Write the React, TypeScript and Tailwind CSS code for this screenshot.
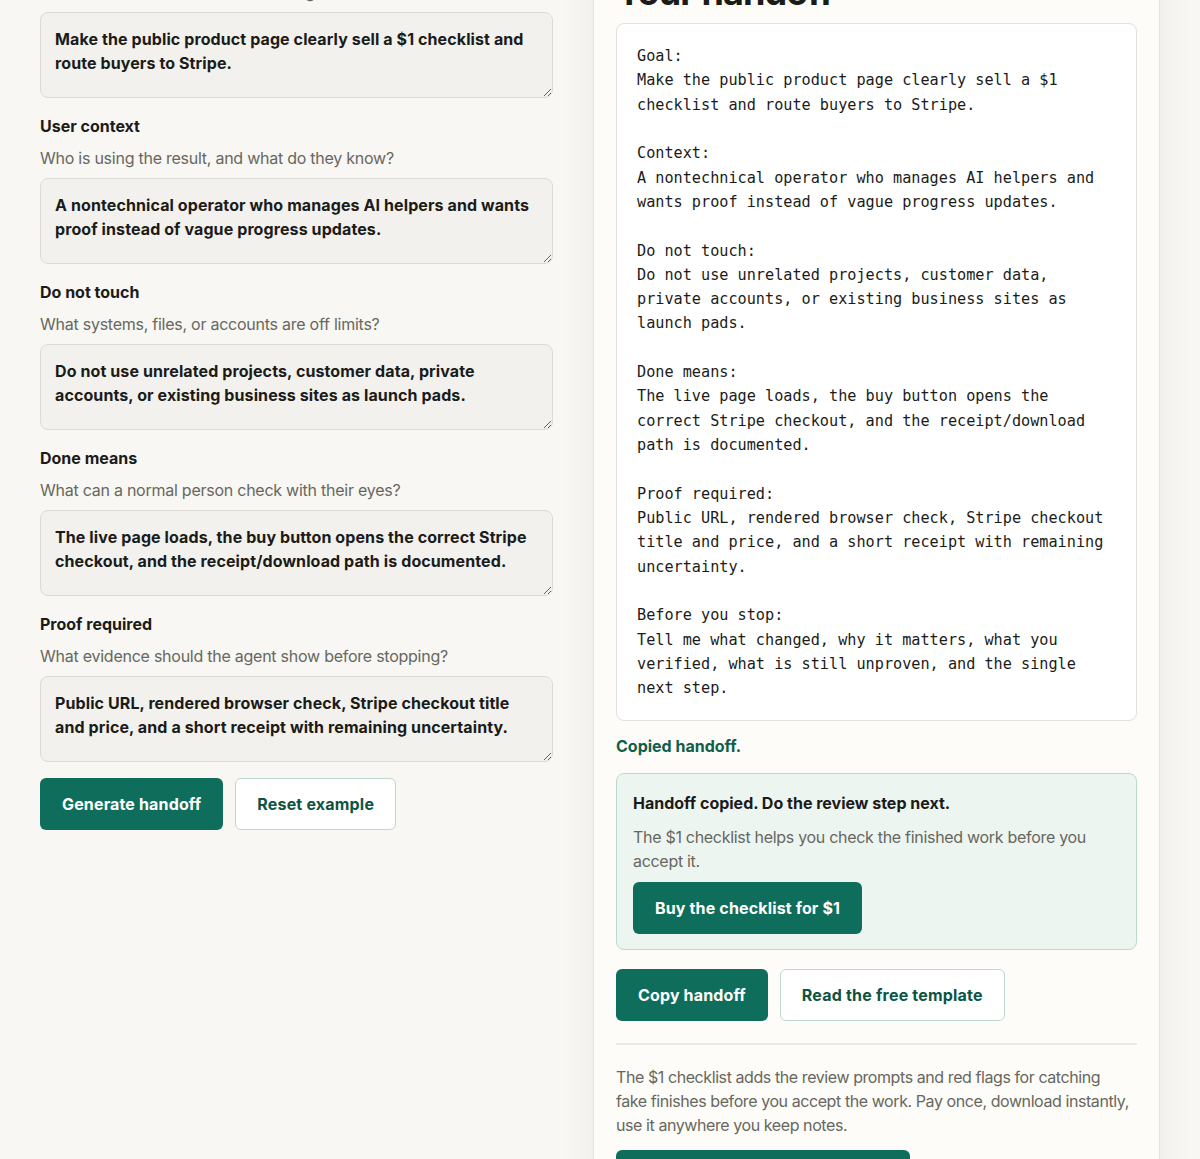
import { useState } from 'react';

type Field = {
  key: string;
  label: string;
  help: string;
  value: string;
};

const initialFields: Field[] = [
  {
    key: 'goal',
    label: 'Goal',
    help: 'What should be different when the agent is finished?',
    value: 'Make the public product page clearly sell a $1 checklist and route buyers to Stripe.',
  },
  {
    key: 'context',
    label: 'User context',
    help: 'Who is using the result, and what do they know?',
    value: 'A nontechnical operator who manages AI helpers and wants proof instead of vague progress updates.',
  },
  {
    key: 'limits',
    label: 'Do not touch',
    help: 'What systems, files, or accounts are off limits?',
    value: 'Do not use unrelated projects, customer data, private accounts, or existing business sites as launch pads.',
  },
  {
    key: 'done',
    label: 'Done means',
    help: 'What can a normal person check with their eyes?',
    value: 'The live page loads, the buy button opens the correct Stripe checkout, and the receipt/download path is documented.',
  },
  {
    key: 'proof',
    label: 'Proof required',
    help: 'What evidence should the agent show before stopping?',
    value: 'Public URL, rendered browser check, Stripe checkout title and price, and a short receipt with remaining uncertainty.',
  },
];

const buildHandoff = (fields: Field[]) => {
  const get = (key: string) => fields.find((f) => f.key === key)?.value.trim() ?? '';
  return [
    `Goal:\n${get('goal')}`,
    `Context:\n${get('context')}`,
    `Do not touch:\n${get('limits')}`,
    `Done means:\n${get('done')}`,
    `Proof required:\n${get('proof')}`,
    'Before you stop:\nTell me what changed, why it matters, what you verified, what is still unproven, and the single next step.',
  ].join('\n\n');
};

const primaryBtn =
  'rounded-md bg-[#0f6e5b] px-[22px] py-[14px] text-base leading-6 font-bold tracking-[0.15px] text-white hover:bg-[#0c5e4d] transition-colors';
const outlineBtn =
  'rounded-md border border-[#bcd8cf] bg-white px-[21px] py-[13px] text-base leading-6 font-bold tracking-[0.2px] text-[#0c5443] hover:bg-[#f3f8f6] transition-colors';

export default function App() {
  const [fields, setFields] = useState<Field[]>(initialFields);
  const [handoff, setHandoff] = useState(() => buildHandoff(initialFields));
  const [copied, setCopied] = useState(true);

  const handleChange = (key: string, value: string) => {
    setFields((prev) => prev.map((f) => (f.key === key ? { ...f, value } : f)));
  };

  return (
    <div className="min-h-screen overflow-hidden bg-[#f8f7f3] font-['Inter',sans-serif] text-[#1b1b19]">
      <div className="-mt-[80px] grid grid-cols-[1fr_567px] gap-10 px-10">
        {/* form column */}
        <div className="pt-[28px]">
          <div className="space-y-4">
            {fields.map((field) => (
              <div key={field.key}>
                <label htmlFor={field.key} className="block text-base leading-6 font-bold text-[#1b1b19]">
                  {field.label}
                </label>
                <p className="mt-2 text-base leading-6 tracking-[-0.25px] text-[#67675f]">{field.help}</p>
                <textarea
                  id={field.key}
                  value={field.value}
                  onChange={(e) => handleChange(field.key, e.target.value)}
                  className="mt-2 block h-[86px] w-full resize-y rounded-lg border border-[#dddbd4] bg-[#f2f1ed] px-[14px] py-[14px] text-base leading-6 font-bold tracking-[0.1px] text-[#1b1b19] focus:outline-none"
                />
              </div>
            ))}
          </div>
          <div className="mt-4 flex gap-3">
            <button type="button" className={primaryBtn} onClick={() => setHandoff(buildHandoff(fields))}>
              Generate handoff
            </button>
            <button
              type="button"
              className={outlineBtn}
              onClick={() => {
                setFields(initialFields);
                setHandoff(buildHandoff(initialFields));
              }}
            >
              Reset example
            </button>
          </div>
        </div>

        {/* output panel */}
        <aside className="min-h-[1400px] border-x border-[#e4e2dc] bg-[#fdfcf8] px-[22px] pt-[50px] shadow-[0_0_36px_rgba(0,0,0,0.06)]">
          <h2 className="text-[36px] leading-[44px] font-bold tracking-tight text-[#1b1b19]">Your handoff</h2>
          <pre className="mt-[9px] whitespace-pre-wrap rounded-lg border border-[#e2e0da] bg-white px-5 pt-5 pb-5 font-['DejaVu_Sans_Mono',monospace] text-[15.2px] leading-[1.6] text-[#1b1b19]">
            {handoff}
          </pre>

          {copied && <p className="mt-[13px] text-base leading-6 font-bold text-[#0f5e4b]">Copied handoff.</p>}

          <div className="mt-[15px] rounded-lg border border-[#bcd9d0] bg-[#edf5f1] px-4 pt-[17px] pb-[15px]">
            <p className="text-base leading-6 font-bold text-[#1b1b19]">Handoff copied. Do the review step next.</p>
            <p className="mt-[10px] text-base leading-6 tracking-[-0.3px] text-[#67675f]">
              The $1 checklist helps you check the finished work before you accept it.
            </p>
            <button type="button" className={`mt-[9px] ${primaryBtn}`}>
              Buy the checklist for $1
            </button>
          </div>

          <div className="mt-[19px] flex gap-3">
            <button type="button" className={primaryBtn} onClick={() => setCopied(true)}>
              Copy handoff
            </button>
            <button type="button" className={outlineBtn}>
              Read the free template
            </button>
          </div>

          <div className="mt-[22px] border-t-2 border-[#ebe9e4] pt-[20px]">
            <p className="text-base leading-6 tracking-[-0.42px] text-[#67675f]">
              The $1 checklist adds the review prompts and red flags for catching
              <br />
              fake finishes before you accept the work. Pay once, download instantly,
              <br />
              use it anywhere you keep notes.
            </p>
            <button type="button" className={`mt-[13px] ${primaryBtn}`}>
              Get the $1 review checklist now
            </button>
          </div>
        </aside>
      </div>
    </div>
  );
}
